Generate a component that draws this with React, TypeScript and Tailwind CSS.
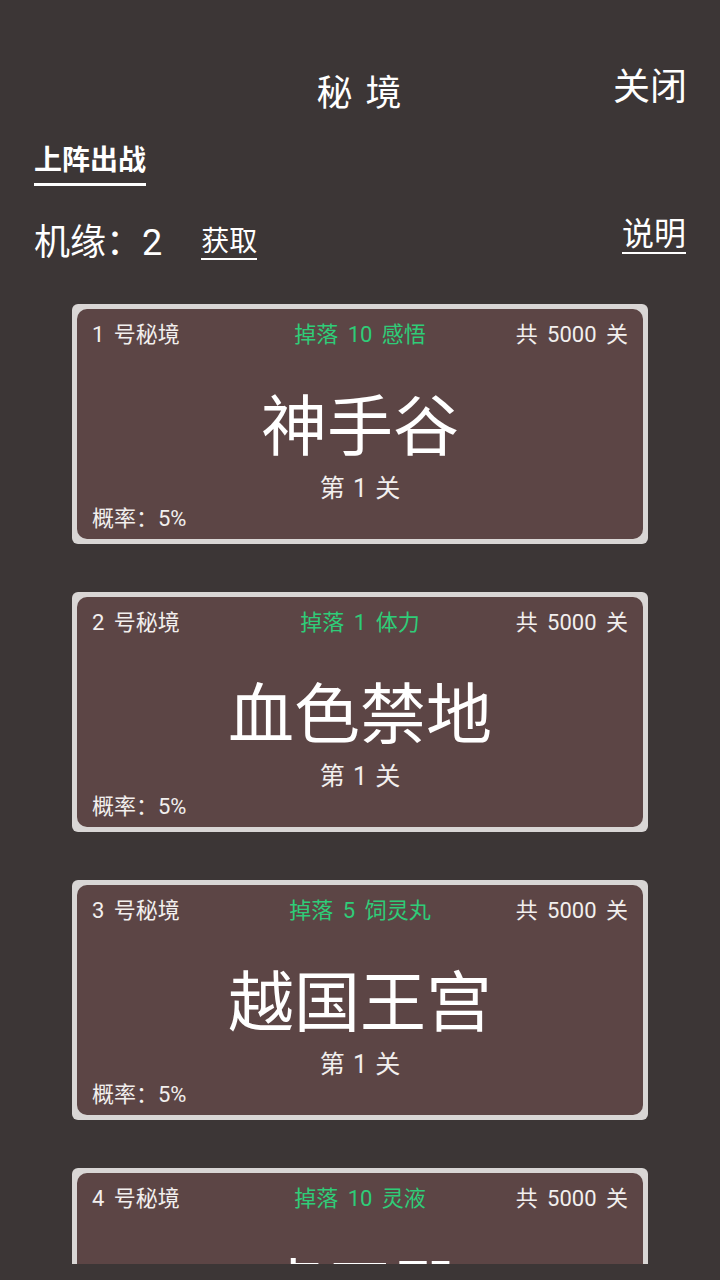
const realms = [
  { no: 1, drop: "掉落 10 感悟", name: "神手谷" },
  { no: 2, drop: "掉落 1 体力", name: "血色禁地" },
  { no: 3, drop: "掉落 5 饲灵丸", name: "越国王宫" },
  { no: 4, drop: "掉落 10 灵液", name: "虚天殿" },
];

function RealmCard({ no, drop, name }: { no: number; drop: string; name: string }) {
  return (
    <div className="rounded-[6px] bg-[#d9d6d5] p-[5px]">
      <div className="rounded-[10px] bg-[#5c4545] px-[15px] pt-[11px] pb-[7px]">
        <div className="grid grid-cols-[1fr_auto_1fr] items-center text-[22px] leading-[30px] [word-spacing:4px]">
          <span className="text-[#f2efee]">{no} 号秘境</span>
          <span className="text-[#2fcc78]">{drop}</span>
          <span className="text-right text-[#f2efee]">共 5000 关</span>
        </div>
        <div className="mt-[42px] text-center text-[66px] leading-[72px] text-white">{name}</div>
        <div className="mt-[10px] text-center text-[25px] leading-[30px] text-[#f2efee] [word-spacing:2px]">第 1 关</div>
        <div className="mt-[2px] text-[22px] leading-[26px] text-[#f2efee]">概率：5%</div>
      </div>
    </div>
  );
}

export default function App() {
  return (
    <div
      className="flex h-[1280px] w-[720px] flex-col overflow-hidden bg-[#3c3636] pb-[16px] text-white"
      style={{ fontFamily: 'Roboto, "Noto Sans CJK SC", sans-serif' }}
    >
      {/* header */}
      <div className="grid grid-cols-3 items-start pt-[66px]">
        <div />
        <div className="mt-[6px] text-center text-[36px] leading-[44px] tracking-[2px]">秘 境</div>
        <div className="pr-[33px] text-right text-[37px] leading-[44px]">关闭</div>
      </div>

      <div className="mt-[27px] pl-[34px]">
        <span className="inline-block border-b-[3px] border-white pb-[4px] text-[28px] font-bold leading-[36px]">
          上阵出战
        </span>
      </div>

      <div className="mt-[30px] flex items-start justify-between px-[34px]">
        <div className="mt-[5px] flex items-center">
          <span className="text-[36px] leading-[44px]">机缘：2</span>
          <span className="ml-[39px] border-b-2 border-white text-[28px] leading-[32px]">获取</span>
        </div>
        <span className="border-b-2 border-white text-[32px] leading-[36px]">说明</span>
      </div>

      <div className="min-h-0 flex-1 overflow-hidden px-[72px] pt-[39px]">
        <div className="flex flex-col gap-[48px]">
          {realms.map((r) => (
            <RealmCard key={r.no} {...r} />
          ))}
        </div>
      </div>
    </div>
  );
}
